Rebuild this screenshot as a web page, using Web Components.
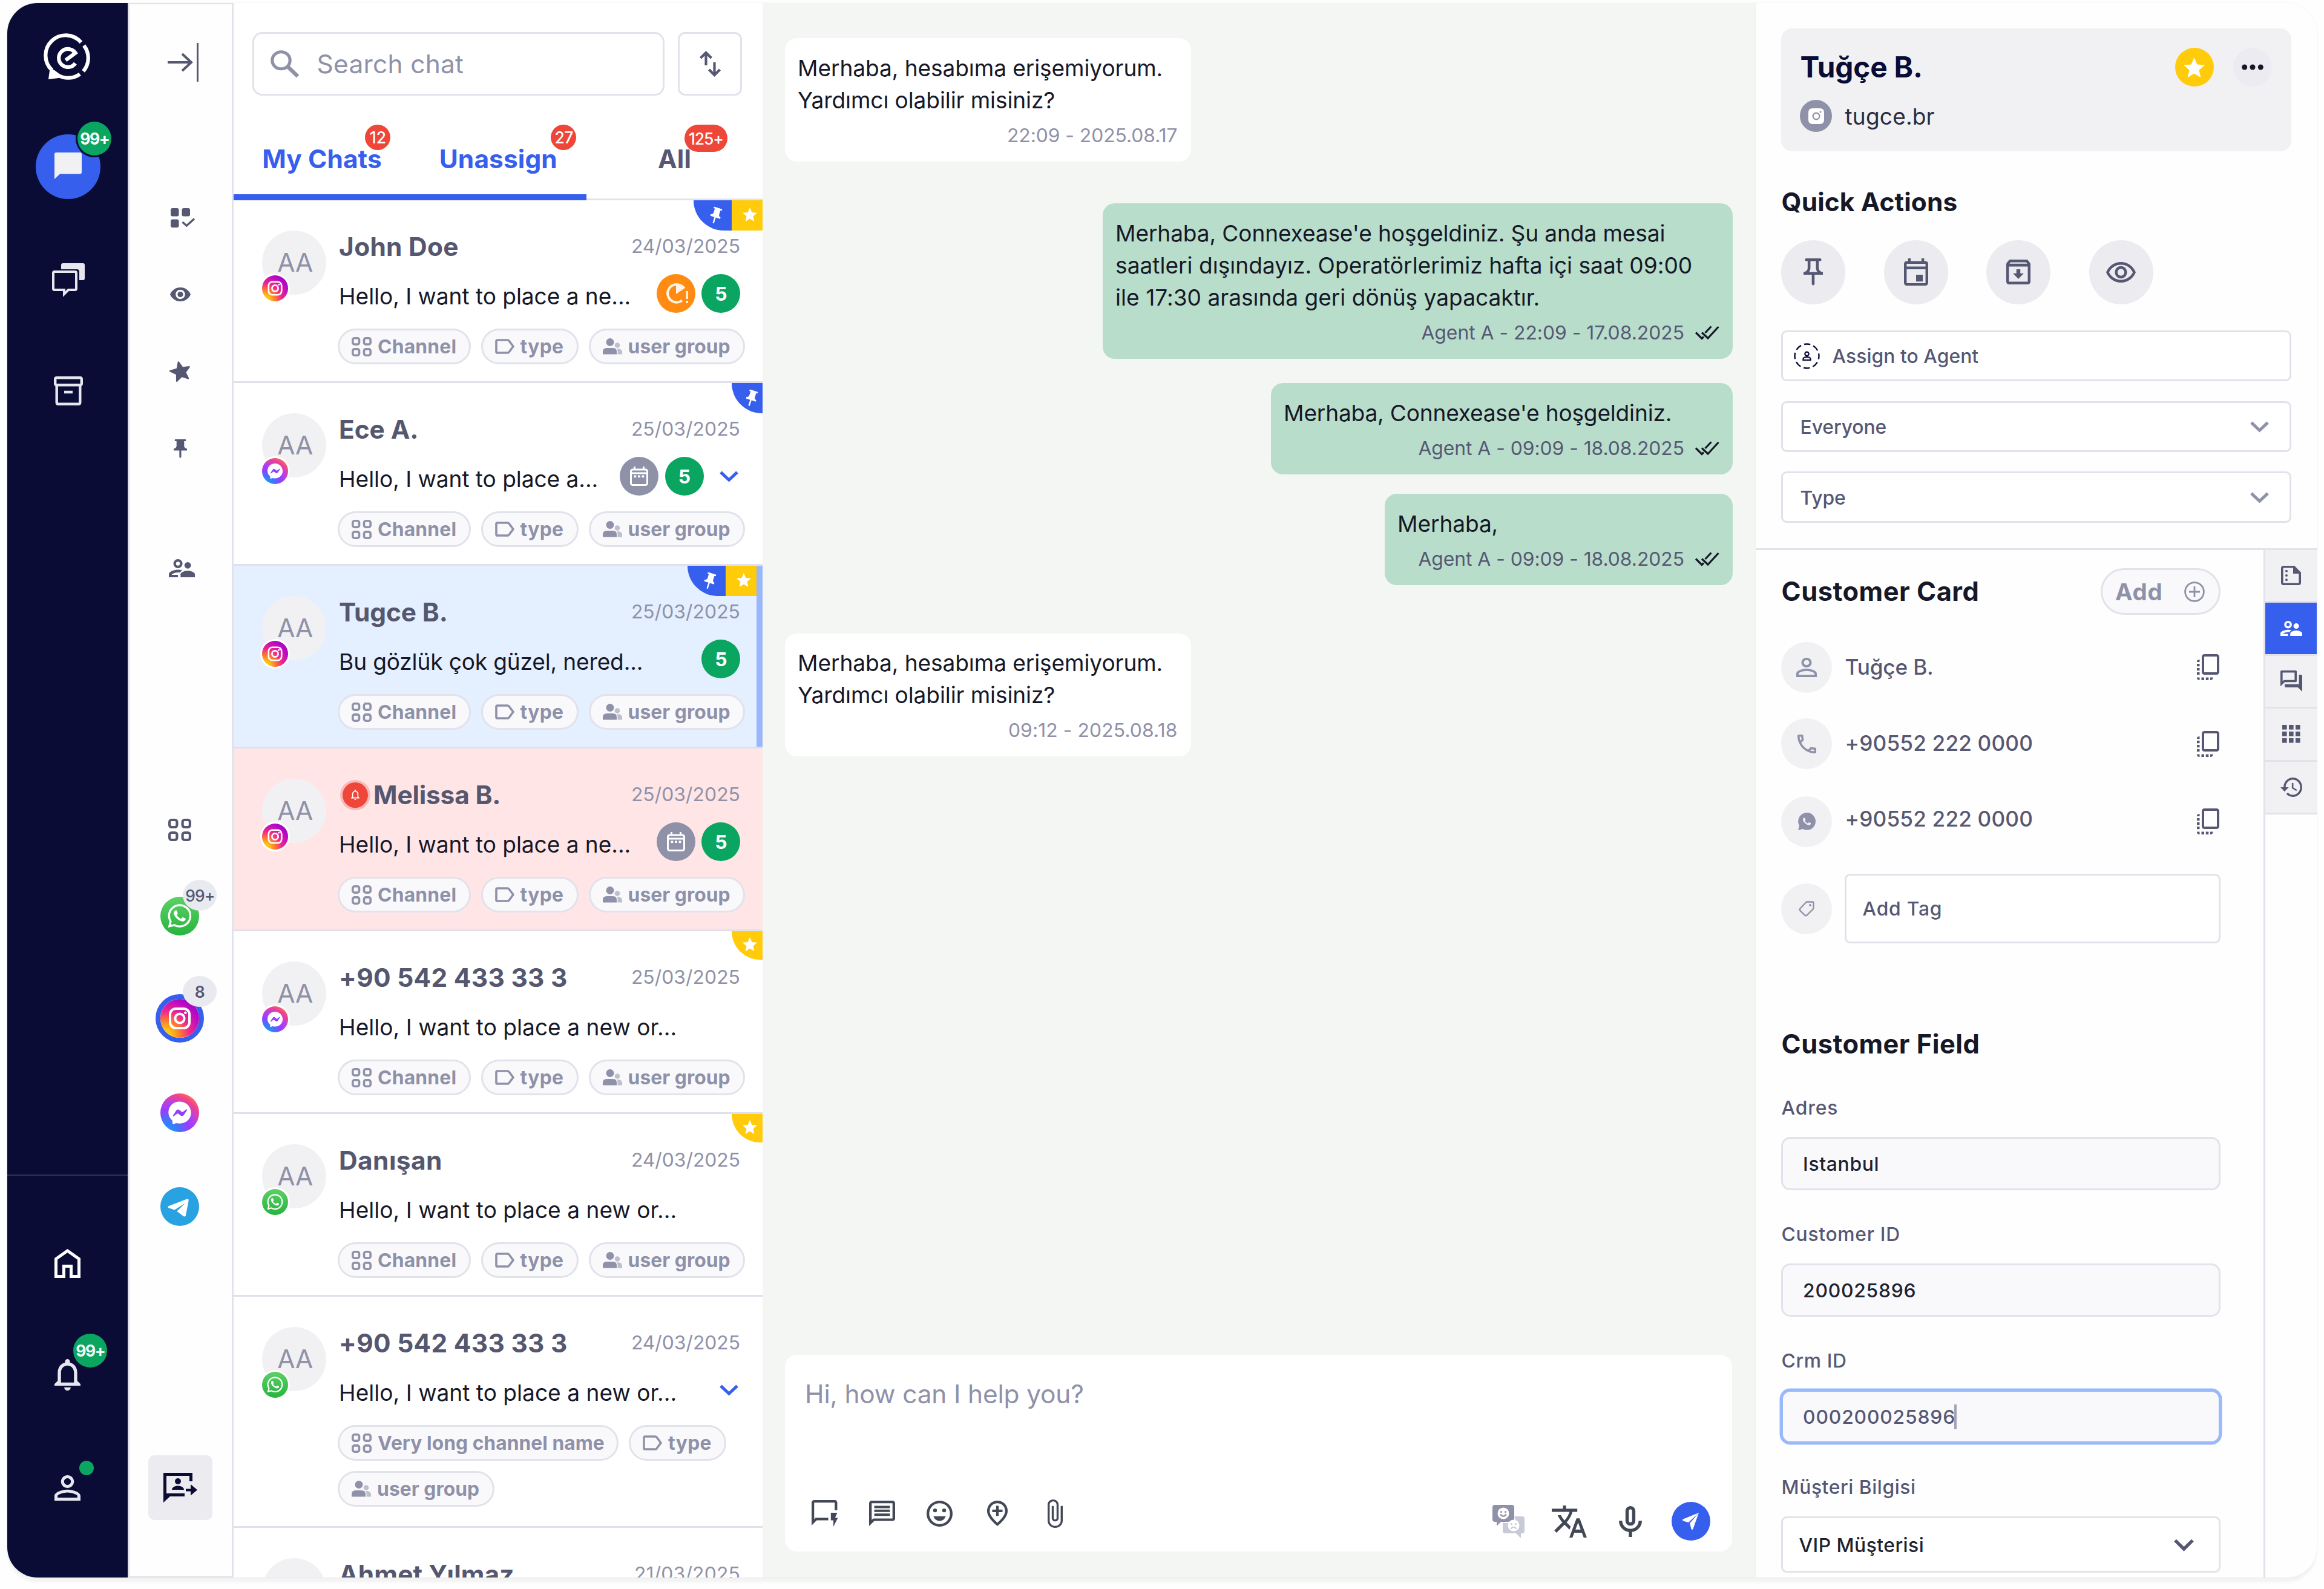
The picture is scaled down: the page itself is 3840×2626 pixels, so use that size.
<!DOCTYPE html>
<html lang="tr">
<head>
<meta charset="utf-8">
<title>Connexease Inbox</title>
<style>
html,body{margin:0;padding:0;background:#fefefe}
body{width:3840px;height:2626px;overflow:hidden;font-family:Inter,"Noto Sans",sans-serif;color:#161827}
</style>
</head>
<body>
<app-shell>
  <main-nav></main-nav>
  <channel-rail></channel-rail>
  <chat-list>
    <chat-card name="John Doe" nw="194" date="24/03/2025" dw="177.5" msg="Hello, I want to place a ne..." mw="479" channel="instagram" flags="pin star" extras="snooze count"></chat-card>
    <chat-card name="Ece A." nw="127.5" date="25/03/2025" dw="177.5" msg="Hello, I want to place a..." mw="425" channel="messenger" flags="pin" extras="calendar count chevron"></chat-card>
    <chat-card name="Tugce B." nw="176" date="25/03/2025" dw="177.5" msg="Bu gözlük çok güzel, nered..." mw="499" channel="instagram" flags="pin star" extras="count" tone="selected"></chat-card>
    <chat-card name="Melissa B." nw="206.5" date="25/03/2025" dw="177.5" msg="Hello, I want to place a ne..." mw="479" channel="instagram" flags="" extras="calendar count" tone="alert"></chat-card>
    <chat-card name="+90 542 433 33 3" nw="374" date="25/03/2025" dw="177.5" msg="Hello, I want to place a new or..." mw="555" channel="messenger" flags="star" extras=""></chat-card>
    <chat-card name="Danışan" nw="167" date="24/03/2025" dw="177.5" msg="Hello, I want to place a new or..." mw="555" channel="whatsapp" flags="star" extras=""></chat-card>
    <chat-card name="+90 542 433 33 3" nw="374" date="24/03/2025" dw="177.5" msg="Hello, I want to place a new or..." mw="555" channel="whatsapp" flags="" extras="chevron" long></chat-card>
    <chat-card name="Ahmet Yılmaz" nw="286" date="21/03/2025" dw="172.5" msg="" mw="" channel="whatsapp" flags="" extras=""></chat-card>
  </chat-list>
  <chat-thread></chat-thread>
  <customer-panel></customer-panel>
</app-shell>
<script>
const ICONS = {
  logo:['0 0 73 73','<g fill="none" stroke="currentColor" stroke-width="6.2"><path d="M58 11A33.3 33.3 0 1 0 10 57 M20 65.4A33.3 33.3 0 0 0 56 63.4"/><path d="M62.6 16.2A33.3 33.3 0 0 1 61.6 58.8"/><path d="M32.5 40.5 48.6 28.6A15 15 0 1 0 48.4 45.6"/></g><path fill="currentColor" d="M6.5 54 4 72 25 69.5 22 63 14 57z"/>'],
  bubble:['0 0 45 44','<path fill="currentColor" d="M3 0h39q3 0 3 3v29.500q0 3-3 3H9L0 44V3q0-3 3-3z"/>'],
  chats:['0 0 54 54','<path fill="currentColor" d="M15 10V3q0-3 3-3h33q3 0 3 3v22q0 3-3 3h-6V14q0-4-4-4z"/><path fill="none" stroke="currentColor" stroke-width="4" d="M4 14h34q2 0 2 2v26q0 2-2 2H27l-7 7v-7H4q-2 0-2-2V16q0-2 2-2z"/>'],
  archive:['0 0 48 48','<g fill="none" stroke="currentColor" stroke-width="4.400"><rect x="2.200" y="2.200" width="43.600" height="12" rx="2"/><path d="M4.700 14v29q0 2.800 2.800 2.800h33q2.800 0 2.800-2.800V14M17 26h14"/></g>'],
  home:['0 0 43 48','<path fill="none" stroke="currentColor" stroke-width="5" d="M2.500 45.500V16.500L21.500 3 40.500 16.500V45.500H27.500V28.500H15.500V45.500Z"/>'],
  bell:['4 2.500 16 19.500','<path fill="currentColor" d="M12 22c1.1 0 2-.9 2-2h-4c0 1.1.9 2 2 2zm6-6v-5c0-3.070-1.630-5.640-4.500-6.320V4c0-.83-.67-1.500-1.500-1.500s-1.500.67-1.500 1.500v.68C7.640 5.360 6 7.920 6 11v5l-2 2v1h16v-1l-2-2zm-2 1H8v-6c0-2.480 1.510-4.500 4-4.500s4 2.020 4 4.500v6z"/>'],
  user:['4 4 16 16','<path fill="currentColor" d="M12 5.900c1.160 0 2.100.94 2.100 2.100s-.94 2.100-2.100 2.100S9.900 9.160 9.900 8s.94-2.100 2.100-2.100m0 9c2.970 0 6.100 1.460 6.100 2.100v1.100H5.900V17c0-.64 3.130-2.100 6.100-2.100M12 4C9.790 4 8 5.790 8 8s1.790 4 4 4 4-1.790 4-4-1.790-4-4-4zm0 9c-2.670 0-8 1.340-8 4v3h16v-3c0-2.660-5.330-4-8-4z"/>'],
  collapse:['0 0 51 64','<g fill="none" stroke="currentColor"><path stroke-width="4" d="M0 32h39M24 18l15 14-15 14"/><path stroke-width="3" d="M49.500 0v64"/></g>'],
  gridcheck:['0 0 40 32','<g fill="currentColor"><rect width="13.500" height="13.500" rx="3"/><rect x="18.500" width="13.500" height="13.500" rx="3"/><rect y="18.500" width="13.500" height="13.500" rx="3"/></g><path fill="none" stroke="currentColor" stroke-width="3.400" d="M19.500 23l6.800 6L39 17.500"/>'],
  eyefill:['1 4.500 22 15','<path fill="currentColor" d="M12 4.500C7 4.500 2.730 7.610 1 12c1.730 4.390 6 7.500 11 7.500s9.270-3.110 11-7.500c-1.730-4.390-6-7.500-11-7.500zM12 17c-2.760 0-5-2.240-5-5s2.240-5 5-5 5 2.240 5 5-2.240 5-5 5zm0-8c-1.660 0-3 1.340-3 3s1.340 3 3 3 3-1.340 3-3-1.340-3-3-3z"/>'],
  star:['2 2 20 19','<path fill="currentColor" d="M12 17.270L18.180 21l-1.640-7.030L22 9.240l-7.190-.61L12 2 9.190 8.630 2 9.240l5.460 4.730L5.820 21z"/>'],
  starside:['2 2 20 20','<path transform="rotate(-85 12 12)" fill="currentColor" stroke="currentColor" stroke-width="1.400" stroke-linejoin="round" d="M12 16.900L17.500 20.200l-1.460-6.250L21 9.700l-6.500-.55L12 2.600 9.500 9.150 3 9.700l4.960 4.250L6.500 20.200z"/>'],
  pin:['5 2 14 20','<path fill="currentColor" d="M16 9V4h1c.55 0 1-.45 1-1s-.45-1-1-1H7c-.55 0-1 .45-1 1s.45 1 1 1h1v5c0 1.660-1.340 3-3 3v2h5.970v7l1 1 1-1v-7H19v-2c-1.660 0-3-1.340-3-3z"/>'],
  pinline:['5 2 14 20','<path fill="currentColor" fill-rule="evenodd" d="M14 4v5c0 1.120.37 2.160 1 3H9c.65-.86 1-1.900 1-3V4h4m3-2H7c-.55 0-1 .45-1 1s.45 1 1 1h1v5c0 1.660-1.340 3-3 3v2h5.970v7l1 1 1-1v-7H19v-2c-1.660 0-3-1.340-3-3V4h1c.55 0 1-.45 1-1s-.45-1-1-1z"/>'],
  people:['2 5 20 14','<g fill="currentColor"><circle cx="16.500" cy="9.800" r="2.500"/><path d="M16.500 14c-1.830 0-5.500.92-5.500 2.750V19h11v-2.250c0-1.830-3.670-2.750-5.500-2.750z"/><path fill-rule="evenodd" d="M9 5a3.500 3.500 0 1 0 0 7 3.500 3.500 0 0 0 0-7zm0 2a1.500 1.500 0 1 1 0 3 1.500 1.500 0 0 1 0-3z"/><path d="M9 13.200c-2.330 0-7 1.170-7 3.500V19h7v-1.900H4.200c.4-.8 2.600-1.700 4.800-1.800l1.500.05c.4-.7 1-1.300 1.900-1.750C11.300 13.400 9.900 13.200 9 13.200z"/></g>'],
  grid:['0 0 38 38','<g fill="none" stroke="currentColor" stroke-width="4.200"><rect x="2.100" y="2.100" width="12.300" height="12.300" rx="3.500"/><rect x="23.600" y="2.100" width="12.300" height="12.300" rx="3.500"/><rect x="2.100" y="23.600" width="12.300" height="12.300" rx="3.500"/><rect x="23.600" y="23.600" width="12.300" height="12.300" rx="3.500"/></g>'],
  transfer:['0 0 56 49','<path fill="none" stroke="currentColor" stroke-width="5" d="M45.500 14V2.500H2.500V42.500L8 36.500H35"/><g fill="currentColor"><path d="M0 30v19l12-11z"/><circle cx="24" cy="14" r="5"/><path d="M14 28c0-4 5-6.500 10-6.500S34 24 34 28z"/><path d="M37 26.500h8V19l11 9.300-11 9.200V30.500h-8z"/></g>'],
  search:['0 0 48 48','<g fill="none" stroke="currentColor"><circle cx="17.500" cy="17.500" r="14.700" stroke-width="5.200"/><path stroke-width="6.500" d="M28.500 28.500 45 45"/></g>'],
  sort:['0 0 35 43','<g fill="none" stroke="currentColor" stroke-width="4.200"><path d="M10.500 24V3M1.500 12l9-9 9 9M24.500 19v21M15.500 31l9 9 9-9"/></g>'],
  tag:['0 0 32 26','<path fill="none" stroke="currentColor" stroke-width="3.600" stroke-linejoin="round" d="M4 2h16.500q1.500 0 2.400 1.200L30 13l-7.100 9.800Q22 24 20.500 24H4q-2 0-2-2V4q0-2 2-2z"/>'],
  group:['0 0 32 27','<g fill="currentColor"><circle cx="12" cy="6.500" r="6.500"/><path d="M0 26.500V22q0-6 7-6h9q7 0 7 6v4.500z"/><g opacity=".55"><circle cx="24" cy="11.500" r="4.300"/><path d="M24.500 26.500V21q0-2.500-1.500-4 9-.5 9 6v3.500z"/></g></g>'],
  chevron:['0 0 32 19','<path fill="none" stroke="currentColor" stroke-width="5.200" d="M2 2.500 16 16 30 2.500"/>'],
  snooze:['0 0 38 36','<path fill="none" stroke="#fff3e6" stroke-width="4" d="M17 3A14.800 14.800 0 1 0 27 29.500"/><path fill="#fff3e6" d="M17 19V1q10 0 15.500 7.500zM33.500 14h3.500v13h-3.500zM33.500 30h3.500v4h-3.500z"/>'],
  calendar:['0 0 30 32','<g fill="none" stroke="currentColor" stroke-width="3"><rect x="1.500" y="5" width="27" height="25.500" rx="3"/><path d="M2 11h26M7.500 0v6M22.500 0v6"/></g><g fill="currentColor"><rect x="6.500" y="14.500" width="3.800" height="3.600"/><rect x="13" y="14.500" width="3.800" height="3.600"/><rect x="19.500" y="14.500" width="3.800" height="3.600"/></g>'],
  checks:['0 0 40 24','<g fill="none" stroke="currentColor" stroke-width="3.200"><path d="M1 12.500 11 22.500 14 19.500M11 12.500l10 9.500L38.500 3M26.500 2.500 16.500 13"/></g>'],
  quick:['2 2 20.500 21','<path fill="currentColor" d="M22 4c0-1.100-.9-2-2-2H4c-1.100 0-1.990.9-1.990 2L2 22l4-4h9v-2H5.170L4 17.170V4h16v6h2V4zM22.500 16h-2.200l1.700-4h-5v6h2v5z"/>'],
  lines:['2 2 20 20','<path fill="currentColor" fill-rule="evenodd" d="M4 4h16v12H5.170L4 17.170V4m0-2c-1.100 0-1.990.9-1.990 2L2 22l4-4h14c1.100 0 2-.9 2-2V4c0-1.100-.9-2-2-2H4zM6 12.100h12v1.900H6zM6 9.050h12v1.900H6zM6 6h12v1.900H6z"/>'],
  smile:['2 2 20 20','<path fill="currentColor" fill-rule="evenodd" d="M12 2a10 10 0 1 0 0 20 10 10 0 0 0 0-20zm0 2a8 8 0 1 1 0 16 8 8 0 0 1 0-16z"/><g fill="currentColor"><circle cx="15.500" cy="9.500" r="1.500"/><circle cx="8.500" cy="9.500" r="1.500"/><path d="M7.300 14h9.400c-.7 2.200-2.500 3.600-4.700 3.600S8 16.200 7.300 14z"/></g>'],
  place:['4 2 16 20','<path fill="none" stroke="currentColor" stroke-width="2" d="M12 20.700c-4.700-4.100-7-7.600-7-10.500C5 5.900 8.200 3 12 3s7 2.900 7 7.200c0 2.900-2.300 6.400-7 10.500z"/><path fill="currentColor" d="M13 6h-2v3H8v2h3v3h2v-3h3V9h-3z"/>'],
  clip:['7 1 11 22','<path fill="currentColor" d="M16.500 6v11.500c0 2.210-1.790 4-4 4s-4-1.790-4-4V5c0-1.380 1.120-2.500 2.500-2.500s2.500 1.120 2.500 2.500v10.500c0 .55-.45 1-1 1s-1-.45-1-1V6H10v9.500c0 1.380 1.120 2.500 2.500 2.500s2.500-1.120 2.500-2.500V5c0-2.210-1.790-4-4-4S7 2.790 7 5v12.500c0 3.040 2.460 5.500 5.500 5.500s5.500-2.460 5.500-5.500V6h-1.500z"/>'],
  mood:['0 0 53 55','<g><path fill="#8f91a8" d="M4 0h28q4 0 4 4v20q0 4-4 4H14l-7 7v-7H4q-4 0-4-4V4q0-4 4-4z"/><circle cx="18" cy="14" r="9.500" fill="#fff"/><g fill="#8f91a8"><circle cx="14.500" cy="11.500" r="1.600"/><circle cx="21.500" cy="11.500" r="1.600"/></g><path d="M13 15.500q5 6.500 10 0" fill="none" stroke="#8f91a8" stroke-width="2.200"/><path fill="#c9cad7" d="M36 19h13q4 0 4 4v20q0 4-4 4h-2v8l-8-8H21q-4 0-4-4V29l4 1h11q5-1 6-6z"/><circle cx="35" cy="34" r="9.500" fill="#fff"/><g fill="#c9cad7"><circle cx="31.500" cy="31.500" r="1.600"/><circle cx="38.500" cy="31.500" r="1.600"/></g><path d="M30.500 39.500q4.500-6 9 0" fill="none" stroke="#c9cad7" stroke-width="2.200"/></g>'],
  translate:['1 2 22 20','<path fill="currentColor" d="M12.870 15.070l-2.540-2.510.03-.03c1.740-1.940 2.980-4.170 3.710-6.530H17V4h-7V2H8v2H1v1.990h11.170C11.500 7.920 10.440 9.750 9 11.350 8.070 10.320 7.300 9.190 6.690 8h-2c.73 1.630 1.730 3.170 2.980 4.560l-5.090 5.020L4 19l5-5 3.110 3.110.76-2.040zM18.500 10h-2L12 22h2l1.120-3h4.750L21 22h2l-4.500-12zm-2.620 7l1.620-4.330L19.120 17h-3.240z"/>'],
  mic:['5 2 14 19','<path fill="currentColor" fill-rule="evenodd" d="M12 14c1.660 0 3-1.340 3-3V5c0-1.660-1.340-3-3-3S9 3.340 9 5v6c0 1.660 1.340 3 3 3zm-1-9c0-.55.45-1 1-1s1 .45 1 1v6c0 .55-.45 1-1 1s-1-.45-1-1V5zm6 6c0 2.760-2.240 5-5 5s-5-2.240-5-5H5c0 3.530 2.610 6.430 6 6.920V21h2v-3.080c3.390-.49 6-3.390 6-6.920h-2z"/>'],
  send:['0 0 27 28','<path fill="currentColor" d="M27 0 1 10.500q-2 1.200 0 3L10 16z"/><path fill="currentColor" d="M27 0 12 17.500l2.500 9q1.300 3 3 0z"/>'],
  event:['3 1 18 20','<path fill="currentColor" fill-rule="evenodd" d="M17 13h-5v5h5zM19 3h-1V1h-2v2H8V1H6v2H5c-1.110 0-2 .9-2 2v14c0 1.100.89 2 2 2h14c1.100 0 2-.9 2-2V5c0-1.100-.9-2-2-2zm0 16.200H5V9h14v10.200zm0-12.200H5V5h14v2z"/>'],
  store:['3 3 18 18','<path fill="currentColor" fill-rule="evenodd" d="M20.540 5.230l-1.390-1.680C18.880 3.210 18.470 3 18 3H6c-.47 0-.88.21-1.160.55L3.460 5.230C3.170 5.570 3 6.020 3 6.500V19c0 1.100.9 2 2 2h14c1.100 0 2-.9 2-2V6.500c0-.48-.17-.93-.46-1.270zM6.240 5h11.520l.83 1H5.420l.82-1zM5 19V8h14v11H5zm8.450-9h-2.900v3H8l4 4 4-4h-2.550z"/>'],
  eye:['1 4 22 15','<path fill="currentColor" fill-rule="evenodd" d="M12 6c3.790 0 7.170 2.130 8.820 5.500C19.170 14.870 15.790 17 12 17s-7.170-2.130-8.820-5.500C4.830 8.130 8.210 6 12 6m0-2C7 4 2.730 7.110 1 11.500 2.730 15.890 7 19 12 19s9.270-3.110 11-7.500C21.270 7.110 17 4 12 4zm0 5c1.380 0 2.500 1.120 2.500 2.500S13.380 14 12 14s-2.500-1.120-2.500-2.500S10.620 9 12 9m0-2c-2.480 0-4.500 2.020-4.500 4.500S9.520 16 12 16s4.500-2.020 4.500-4.500S14.480 7 12 7z"/>'],
  dots:['0 0 36 10','<g fill="#161827"><circle cx="4.700" cy="5" r="4.500"/><circle cx="18" cy="5" r="4.500"/><circle cx="31.300" cy="5" r="4.500"/></g>'],
  igfill:['0 0 26 26','<path fill="#fff" fill-rule="evenodd" d="M7 0h12q7 0 7 7v12q0 7-7 7H7q-7 0-7-7V7q0-7 7-7zm6 6.500a6.500 6.500 0 1 0 0 13 6.500 6.500 0 0 0 0-13zm0 2.200a4.300 4.300 0 1 1 0 8.600 4.300 4.300 0 0 1 0-8.600zM20 4.500a1.500 1.500 0 1 0 0 3 1.500 1.500 0 0 0 0-3z"/>'],
  agent:['0 0 43 43','<circle cx="21.500" cy="21.500" r="20" fill="none" stroke="currentColor" stroke-width="2.400" stroke-dasharray="10.500 5.208" stroke-dashoffset="5.200"/><g fill="none" stroke="currentColor" stroke-width="2.200"><circle cx="21.500" cy="17.800" r="3.200"/><path d="M15.400 28.200v-1.600q0-3.400 6.100-3.400t6.100 3.400v1.600z"/></g>'],
  plus:['0 0 34 34','<g fill="none" stroke="currentColor" stroke-width="2.800"><circle cx="17" cy="17" r="15.400"/><path d="M17 8v18M8 17h18"/></g>'],
  copy:['0 0 37 43','<rect x="10" y="2" width="25" height="30" rx="2.500" fill="none" stroke="currentColor" stroke-width="4"/><g fill="currentColor"><path d="M0 12q0-3 4.500-3v4H0z"/><rect y="16" width="4.500" height="4.200"/><rect y="23" width="4.500" height="4.200"/><rect y="30" width="4.500" height="4.200"/><path d="M0 38.500h4.500V43Q0 43 0 38.500z"/><rect x="7.500" y="38.500" width="4.500" height="4.500"/><rect x="14.800" y="38.500" width="4.500" height="4.500"/><path d="M22 38.500h4.500Q26.500 43 22 43z"/></g>'],
  phone:['3 3 18 18','<path fill="currentColor" fill-rule="evenodd" d="M6.540 5c.06.89.21 1.760.45 2.590l-1.200 1.200c-.41-1.200-.67-2.470-.76-3.790h1.510m9.860 12.020c.85.24 1.720.39 2.600.45v1.490c-1.320-.09-2.590-.35-3.800-.75l1.200-1.190M7.500 3H4c-.55 0-1 .45-1 1 0 9.390 7.610 17 17 17 .55 0 1-.45 1-1v-3.490c0-.55-.45-1-1-1-1.240 0-2.450-.2-3.570-.57-.1-.04-.21-.05-.31-.05-.26 0-.51.1-.71.29l-2.200 2.200c-2.830-1.450-5.150-3.760-6.590-6.590l2.200-2.200c.28-.28.36-.67.25-1.020C8.700 6.450 8.500 5.250 8.500 4c0-.55-.45-1-1-1z"/>'],
  price:['0 0 26 26','<path fill="none" stroke="currentColor" stroke-width="2.400" stroke-linejoin="round" d="M14 1.500h9q1.500 0 1.500 1.500v8.500q0 1.300-1 2.200L13.500 23.500q-1.800 1.500-3.400 0l-7.700-7.600q-1.500-1.700 0-3.400L11.800 2.500q.9-1 2.200-1z"/><circle cx="19" cy="6.800" r="1.900" fill="currentColor"/>'],
  doc:['0 0 33 33','<path fill="none" stroke="currentColor" stroke-width="3.600" d="M21.500 1.800H4q-2.200 0-2.200 2.200v25q0 2.200 2.200 2.200h25q2.200 0 2.200-2.200V12z"/><g fill="currentColor"><path d="M20 0v13.500h12z"/><circle cx="9" cy="9" r="2"/><circle cx="9" cy="16.500" r="2"/><circle cx="9" cy="24" r="2"/></g>'],
  forum:['2 2 20 20','<path fill="currentColor" fill-rule="evenodd" d="M15 4v7H5.170L4 12.170V4h11m1-2H3c-.55 0-1 .45-1 1v14l4-4h10c.55 0 1-.45 1-1V3c0-.55-.45-1-1-1zm5 4h-2v9H6v2c0 .55.45 1 1 1h11l4 4V7c0-.55-.45-1-1-1z"/>'],
  apps:['0 0 30 30','<g fill="currentColor">'+[0,11,22].map(y=>[0,11,22].map(x=>`<rect x="${x}" y="${y}" width="7.600" height="7.600"/>`).join('')).join('')+'</g>'],
  history:['1 3 21 18','<path fill="currentColor" d="M13 3c-4.970 0-9 4.030-9 9H1l3.890 3.890.07.14L9 12H6c0-3.870 3.130-7 7-7s7 3.130 7 7-3.130 7-7 7c-1.930 0-3.680-.79-4.940-2.060l-1.420 1.420C8.270 19.990 10.510 21 13 21c4.970 0 9-4.030 9-9s-4.030-9-9-9zm-1 5v5l4.280 2.540.72-1.210-3.500-2.080V8H12z"/>']
};
const WA_PHONE='M17.472 14.382c-.297-.149-1.758-.867-2.03-.967-.273-.099-.471-.148-.67.15-.197.297-.767.966-.94 1.164-.173.199-.347.223-.644.075-.297-.15-1.255-.463-2.39-1.475-.883-.788-1.48-1.761-1.653-2.059-.173-.297-.018-.458.13-.606.134-.133.298-.347.446-.52.149-.174.198-.298.298-.497.099-.198.05-.371-.025-.52-.075-.149-.669-1.612-.916-2.207-.242-.579-.487-.5-.669-.51-.173-.008-.371-.01-.57-.01-.198 0-.52.074-.792.372-.272.297-1.04 1.016-1.04 2.479 0 1.462 1.065 2.875 1.213 3.074.149.198 2.096 3.2 5.077 4.487.709.306 1.262.489 1.694.625.712.227 1.36.195 1.871.118.571-.085 1.758-.719 2.006-1.413.248-.694.248-1.289.173-1.413-.074-.124-.272-.198-.57-.347';
const WA_OUTER='M20.464 3.488A11.815 11.815 0 0012.05 0C5.495 0 .16 5.335.157 11.892c0 2.096.547 4.142 1.588 5.945L.057 24l6.305-1.654a11.882 11.882 0 005.683 1.448h.005c6.554 0 11.89-5.335 11.893-11.893a11.821 11.821 0 00-3.48-8.413z';
const WA_INNER='M12.051 21.785h-.004a9.87 9.87 0 01-5.031-1.378l-.361-.214-3.741.982.998-3.648-.235-.374a9.86 9.86 0 01-1.51-5.26c.001-5.45 4.436-9.884 9.888-9.884 2.64 0 5.122 1.03 6.988 2.898a9.825 9.825 0 012.893 6.994c-.003 5.45-4.437 9.884-9.885 9.884z';
ICONS.whatsapp=['0 0 64 64',`<defs><linearGradient id="g" x1="0" y1="0" x2="0" y2="1"><stop offset="0" stop-color="#5bd066"/><stop offset="1" stop-color="#27b43e"/></linearGradient></defs><circle cx="32" cy="32" r="32" fill="url(#g)"/><g transform="translate(12.400 12.200) scale(1.620)" fill="#fff"><path fill-rule="evenodd" d="${WA_OUTER}${WA_INNER}"/><path d="${WA_PHONE}"/></g>`];
ICONS.wafill=['0 0 24 24',`<path fill="currentColor" d="${WA_OUTER}"/><path fill="#f1f1f4" transform="translate(1.200 1.200) scale(.9)" d="${WA_PHONE}"/>`];
ICONS.instagram=['0 0 64 64','<defs><radialGradient id="g" cx=".12" cy=".95" r="1.150"><stop offset="0" stop-color="#ffd500"/><stop offset=".15" stop-color="#ffc210"/><stop offset=".38" stop-color="#ff6a3c"/><stop offset=".55" stop-color="#f0288c"/><stop offset=".82" stop-color="#b80ac4"/><stop offset="1" stop-color="#a000c8"/></radialGradient></defs><circle cx="32" cy="32" r="32" fill="url(#g)"/><g fill="none" stroke="#fff" stroke-width="4"><rect x="16" y="16" width="32" height="32" rx="9.500"/><circle cx="32" cy="32" r="7.600"/></g><circle cx="41.300" cy="22.700" r="2.200" fill="#fff"/>'];
ICONS.messenger=['0 0 64 64','<defs><radialGradient id="g" cx=".18" cy="1" r="1.100"><stop offset="0" stop-color="#0aa0ff"/><stop offset=".32" stop-color="#4f6bfa"/><stop offset=".52" stop-color="#9a3cff"/><stop offset=".68" stop-color="#b340ea"/><stop offset=".88" stop-color="#f0428c"/><stop offset="1" stop-color="#ff6a60"/></radialGradient></defs><circle cx="32" cy="32" r="32" fill="url(#g)"/><path fill="#fff" d="M32 13.500c-10.800 0-18.700 7.700-18.700 17.700 0 5.300 2.200 9.800 5.800 13 .5.500.8 1.200.8 1.800l.1 3.300c0 1.200 1.200 1.800 2.200 1.400l3.700-1.700c2 .5 4 .8 6.100.8 10.800 0 18.700-7.700 18.700-17.700S42.800 13.500 32 13.500z"/><path fill="#9440ff" d="M20.800 36.600l5.500-8.500q2-2.600 5-.8l4.200 3.200q.9.500 1.700 0l5.700-4.200c.8-.5 1.700.3 1.300 1.100l-5.500 8.400q-2 2.700-5 .9l-4.300-3.200q-.8-.6-1.700 0l-5.700 4.300c-.8.500-1.700-.4-1.200-1.200z"/>'];
ICONS.telegram=['0 0 64 64','<circle cx="32" cy="32" r="32" fill="#29a2e2"/><path fill="#fff" d="M13.500 31.300 43.800 19.600q3.200-1 2.900 2.300L42 46.500q-1 3.200-3.800 1.400l-11-8.200 14.200-13.500-18 11.200-9.600-3.200q-2.300-1.400-.3-2.900z"/>'];

class Base extends HTMLElement {
  render(css, html){ if(!this.shadowRoot) this.attachShadow({mode:'open'}); this.shadowRoot.innerHTML = `<style>${css}</style>${html}`; }
}
/* Single text run; "w" is its drawn width, reached by tracking. */
customElements.define('ui-text', class extends Base {
  connectedCallback(){
    const s=+this.getAttribute('s')||37.1, wt=this.getAttribute('b')||400, c=this.getAttribute('c')||'inherit';
    this.render(`:host{display:block;flex:none;width:max-content;height:${s}px;white-space:nowrap;font-size:${s}px;line-height:${s}px;font-weight:${wt};color:${c}}div{padding:.700px 0 0 .600px}`,'<div><slot></slot></div>');
    const w=+this.getAttribute('w'), n=this.textContent.length;
    if(w && n>1) queueMicrotask(()=>{ const nat=this.getBoundingClientRect().width; this.style.letterSpacing=((w+s*.1-nat)/n).toFixed(3)+'px'; });
  }
});
const T=(t,s,b,c,w,extra='')=>`<ui-text s="${s}" b="${b}" c="${c}" w="${w||''}" ${extra}>${t}</ui-text>`;
customElements.define('ui-icon', class extends Base {
  connectedCallback(){
    const [vb,body]=ICONS[this.getAttribute('name')], w=this.getAttribute('w'), h=this.getAttribute('h')||w;
    this.render(`:host{display:block;flex:none;width:${w}px;height:${h}px}svg{display:block;width:100%;height:100%;overflow:visible}`,`<svg viewBox="${vb}" preserveAspectRatio="none">${body}</svg>`);
  }
});
const I=(n,w,h,extra='')=>`<ui-icon name="${n}" w="${w}" h="${h||w}" ${extra}></ui-icon>`;
customElements.define('app-shell', class extends Base {
  connectedCallback(){ this.render(`:host{display:block;width:3816px;height:2602px;margin:5px 12px 0;border-radius:50px;box-shadow:0 8px 4px rgba(0,0,0,.045),0 0 3px rgba(0,0,0,.08)}.in{display:flex;height:100%;border-radius:50px;overflow:hidden;background:#fefefe}`,'<div class="in"><slot></slot></div>'); }
});
customElements.define('main-nav', class extends Base {
  connectedCallback(){ this.render(`
:host{display:flex;flex-direction:column;justify-content:space-between;width:199px;height:100%;background:#0a0c36;color:#e6e7ee;flex:none}
.top,.bot{display:flex;flex-direction:column;align-items:center}
.top{padding:54px 0 0 2px}.bot{height:664px;border-top:2px solid #30344f}
.cur{position:relative;display:flex;align-items:center;justify-content:center;width:107px;height:107px;border-radius:50%;background:#375fee;margin:90px 0 106px;color:#f1f1f4}
.n{position:absolute;display:flex;align-items:center;justify-content:center;width:56px;height:56px;border-radius:50%;background:#0aa560}
.cur .n{left:69px;top:-21px;box-shadow:0 0 0 3px #0a0c36}
.r{position:relative}
`,`<div class="top">${I('logo',73,73,'style="color:#fff"')}<div class="cur">${I('bubble',45,44,'style="margin-top:-4px"')}<div class="n">${T('99+',26.5,700,'#fff',46)}</div></div>${I('chats',54)}${I('archive',48,48,'style="margin-top:133px"')}</div>
<div class="bot">${I('home',43,48,'style="margin-top:121px;color:#fff"')}<div class="r" style="margin-top:134px">${I('bell',43,52)}<div class="n" style="left:31px;top:-42px">${T('99+',26.5,700,'#f1f8f4',46)}</div></div><div class="r" style="margin-top:140px">${I('user',43,42)}<div class="n" style="left:41px;top:-24px;width:24px;height:24px"></div></div></div>`); }
});
customElements.define('channel-rail', class extends Base {
  connectedCallback(){ this.render(`
:host{display:flex;flex-direction:column;box-sizing:border-box;align-items:center;width:175px;height:100%;border:2px solid #e1e2ea;border-left-width:3px;border-right-width:3px;padding-right:3px;color:#565873;flex:none;background:#fefefe}
.r{position:relative;left:0}.b{position:absolute;display:flex;align-items:center;justify-content:center;width:56px;height:51px;border-radius:50%;background:#e9eaef}
.ring{border:8px solid #375fee;border-radius:50%}
.btn{display:flex;align-items:center;justify-content:center;width:106px;height:107px;border-radius:10px;background:#ebebf0;color:#0a0c36;margin:379px 0 0 2px}
`,`${I('collapse',51,64,'style="margin:64px 0 0 10px"')}${I('gridcheck',40,32,'style="margin:209px 0 0 9px"')}${I('eyefill',34,23,'style="margin:99px 0 0 2px"')}${I('starside',35,35,'style="margin-top:99px"')}${I('pin',22,31,'style="margin:94px 0 0 2px"')}${I('people',43,30,'style="margin:167px 0 0 6px"')}${I('grid',38,37,'style="margin-top:399px"')}
<div class="r" style="margin-top:92px">${I('whatsapp',64)}<div class="b" style="left:37px;top:-28px">${T('99+',26.5,500,'#565873',46)}</div></div>
<div class="r ring" style="margin-top:97px">${I('instagram',64)}<div class="b" style="left:37px;top:-38px">${T('8',26.5,600,'#565873','')}</div></div>
<div style="margin-top:84px">${I('messenger',64)}</div><div style="margin-top:91px">${I('telegram',64)}</div>
<div class="btn">${I('transfer',56,49)}</div>`); }
});
customElements.define('ui-chip', class extends Base {
  connectedCallback(){ const k=this.getAttribute('icon'); const [w,h]={grid:[33,32],tag:[32,25],group:[32,27]}[k];
    this.render(`:host{display:flex;flex:none;box-sizing:border-box;align-items:center;height:59px;width:${this.getAttribute('width')}px;padding-left:20px;gap:9.500px;border:3px solid #e1e2ea;border-radius:30px;background:#f9f9fc;color:#8f91a8}`,
    `${I(k,w,h)}${T(this.getAttribute('label'),31.8,700,'#8f91a8',this.getAttribute('tw'))}`); }
});
customElements.define('chat-list', class extends Base {
  connectedCallback(){ this.render(`
:host{display:block;width:874px;height:100%;overflow:hidden;background:#fff;flex:none}
.s{display:flex;gap:22px;padding:48px 0 0 31px}
.f{box-sizing:border-box;display:flex;align-items:center;width:681px;height:105px;border:3px solid #e1e2ea;border-radius:16px;padding-left:27px;gap:28px;color:#8f91a8}
.o{box-sizing:border-box;display:flex;align-items:center;justify-content:center;width:106px;height:105px;border:3px solid #e1e2ea;border-radius:12px;color:#565873}
.t{display:flex;height:173px}
.t>div{position:relative;box-sizing:border-box;flex:1;display:flex;justify-content:center;padding-top:83px;border-bottom:3px solid #e1e2ea}
.t>.on{border-bottom:10px solid #375fee}
.n{position:absolute;top:48px;display:flex;align-items:center;justify-content:center;height:42px;width:42px;border-radius:23px;background:#ee4639}
`,`<div class="s"><div class="f">${I('search',48,46)}${T('Search chat',42.4,400,'#8f91a8',239)}</div><div class="o">${I('sort',35,43)}</div></div>
<div class="t"><div class="on">${T('My Chats',42.4,700,'#375fee',194)}<div class="n" style="left:217px">${T('12',26.5,500,'#fff',25)}</div></div><div class="on">${T('Unassign',42.4,700,'#375fee',191.5)}<div class="n" style="left:233px">${T('27',26.5,500,'#fff',28)}</div></div><div>${T('All',42.4,700,'#565873',51.5)}<div class="n" style="left:162px;width:71px;height:45px">${T('125+',26.5,500,'#fff',55)}</div></div></div><slot></slot>`); }
});
customElements.define('chat-card', class extends Base {
  connectedCallback(){ const a=k=>this.getAttribute(k)||''; const sel=a('tone')==='selected', al=a('tone')==='alert', long=this.hasAttribute('long');
    const flags=a('flags').split(' ').filter(Boolean), ex=a('extras').split(' ').filter(Boolean);
    const E={snooze:`<div class="c" style="background:#ff8b13">${I('snooze',38,36,'style="margin-left:4px"')}</div>`,calendar:`<div class="c" style="background:#8f91a8;color:#fff">${I('calendar',30,32)}</div>`,count:`<div class="c" style="background:#0aa560">${T('5',31.8,700,'#fff','')}</div>`,chevron:I('chevron',31,18,`style="color:#375fee;margin:0 3px 0 16px"`)};
    this.render(`
:host{position:relative;display:flex;box-sizing:border-box;height:${long?382:302}px;border-bottom:3px solid #dfe1ea;background:${sel?'#e4efff':al?'#ffe5e6':'#fff'}}
.bar{position:absolute;right:0;top:0;bottom:0;width:10px;background:#9ab7fa}
.fl{position:absolute;right:${sel?10:0}px;top:0;display:flex;height:${flags[0]==='star'?47:50}px;border-bottom-left-radius:50px;overflow:hidden;color:#fff}
.fl div{display:flex;align-items:center;justify-content:center;width:51px}
.fl .pin{background:#375fee}.fl .star{background:#ffcb0b}.fl .w{width:63px;}
.av{position:relative;display:flex;align-items:center;justify-content:center;width:106px;height:106px;border-radius:50%;background:#f1f1f4;margin:50px 19px 0 47px;flex:none}
.av ui-icon{position:absolute;left:0;bottom:-11px;border-radius:50%;box-shadow:0 0 0 3px #fff}
.bd{flex:1;padding-top:47px}
.r1{display:flex;align-items:center;justify-content:space-between;height:60px;padding:0 37px 0 1.500px}
.nm{display:flex;align-items:center;gap:9px}
.bell{display:flex;align-items:center;justify-content:center;width:42px;height:42px;border-radius:50%;background:#ee4639;box-shadow:0 0 0 4px #f9b9b6;color:#fff;margin-left:6px}
.r2{display:flex;align-items:center;justify-content:space-between;height:64px;margin-top:15px;padding:0 37px 0 1.500px}
.ex{display:flex;align-items:center;gap:10.5px}.c{display:flex;align-items:center;justify-content:center;width:64px;height:64px;border-radius:50%}
.ch{display:flex;flex-wrap:wrap;gap:17px;margin-top:26px;width:690px}
`,`${sel?'<div class="bar"></div>':''}<div class="fl">${flags.map((f,i)=>`<div class="${f}${flags.length>1&&i==0?' w':''}">${f==='pin'?I('pin',17,27,`style="transform:rotate(18deg);margin-left:${flags.length>1?10:14}px"`):I('star',24,23,'style="margin-left:8px;margin-top:-4px"')}</div>`).join('')}</div>
<div class="av">${a('msg')?T('AA',42.400,400,'#8f91a8',55.500,'style="margin-left:3px"')+I(a('channel'),43):''}</div>
<div class="bd"><div class="r1"><div class="nm">${al?`<div class="bell">${I('bell',14,17)}</div>`:''}${T(a('name'),42.4,700,'#55576f',a('nw'))}</div>${T(a('date'),31.8,400,'#8f91a8',a('dw'),'style="margin-bottom:3px"')}</div>
${a('msg')?`<div class="r2">${T(a('msg'),37.1,400,'#161827',a('mw'),'style="margin-top:7px"')}<div class="ex">${ex.map(e=>E[e]).join('')}</div></div>
<div class="ch">${long?'<ui-chip icon="grid" label="Very long channel name" tw="372" width="464"></ui-chip>':'<ui-chip icon="grid" label="Channel" tw="127.5" width="219.500"></ui-chip>'}<ui-chip icon="tag" label="type" tw="69" width="161"></ui-chip><ui-chip icon="group" label="user group" tw="166.5" width="258.500"></ui-chip></div>`:''}</div>`); }
});
customElements.define('chat-bubble', class extends Base {
  connectedCallback(){ const out=this.hasAttribute('out'); const lines=this.getAttribute('lines').split('|').map(l=>l.split('~'));
    this.render(`
:host{display:block;box-sizing:border-box;width:${this.getAttribute('width')}px;align-self:${out?'flex-end':'flex-start'};background:${out?'#b8ddcb':'#fff'};border-radius:20px;padding:22px 22px 22.500px 20.500px}
.l{display:flex;align-items:center;height:53px}.m{display:flex;align-items:center;justify-content:flex-end;height:42px;margin-top:11px;gap:18px;color:#161827}`,
    `${lines.map(([t,w])=>`<div class="l">${T(t,37.1,400,'#161827',w)}</div>`).join('')}<div class="m">${T(this.getAttribute('meta'),31.8,400,out?'#565873':'#8f91a8',this.getAttribute('mw'))}${out?I('checks',40,24):''}</div>`); }
});
customElements.define('chat-thread', class extends Base {
  connectedCallback(){ this.render(`
:host{display:flex;flex-direction:column;box-sizing:border-box;width:1640px;height:100%;padding:58px 37px 43px;background:#f4f6f3;flex:none}
.box{box-sizing:border-box;display:flex;flex-direction:column;justify-content:space-between;width:1565px;height:325px;background:#fff;border-radius:20px;margin-top:auto;padding:43px 36px 18px 32.500px;color:#434856}
.r{display:flex;justify-content:space-between;align-items:center}.a,.b{display:flex;align-items:center}
.a{gap:52px;padding-left:11px;margin-top:-26px}
.send{display:flex;align-items:center;justify-content:center;width:64px;height:64px;border-radius:50%;background:#375fee;color:#fff;margin-left:49px}
`,`<chat-bubble width="670.500" lines="Merhaba, hesabıma erişemiyorum.~600|Yardımcı olabilir misiniz?~422" meta="22:09 - 2025.08.17" mw="279"></chat-bubble>
<chat-bubble out width="1041" style="margin-top:69.500px" lines="Merhaba, Connexease'e hoşgeldiniz. Şu anda mesai~905|saatleri dışındayız. Operatörlerimiz hafta içi saat 09:00~950|ile 17:30 arasında geri dönüş yapacaktır.~698" meta="Agent A - 22:09 - 17.08.2025" mw="432"></chat-bubble>
<chat-bubble out width="763" style="margin-top:40.500px" lines="Merhaba, Connexease'e hoşgeldiniz.~638" meta="Agent A - 09:09 - 18.08.2025" mw="437"></chat-bubble>
<chat-bubble out width="575" style="margin-top:32.500px" lines="Merhaba,~163" meta="Agent A - 09:09 - 18.08.2025" mw="437"></chat-bubble>
<chat-bubble width="670.500" style="margin-top:80px" lines="Merhaba, hesabıma erişemiyorum.~600|Yardımcı olabilir misiniz?~422" meta="09:12 - 2025.08.18" mw="277"></chat-bubble>
<div class="box">${T('Hi, how can I help you?',42.4,400,'#8f91a8',457)}
<div class="r"><div class="a">${I('quick',43.500,44)}${I('lines',43,42)}${I('smile',43,43)}${I('place',34,42,'style="margin:0 4px 0 5px"')}${I('clip',25,47,'style="margin-left:10px"')}</div>
<div class="b">${I('mood',53,55)}${I('translate',58,53,'style="margin-left:45px"')}${I('mic',38,51,'style="margin-left:53px"')}<div class="send">${I('send',27,28,'style="margin-right:2px"')}</div></div></div></div>`); }
});
customElements.define('form-field', class extends Base {
  connectedCallback(){ const f=this.hasAttribute('focused'), s=this.hasAttribute('select'); const a=k=>this.getAttribute(k);
    this.render(`
:host{display:block;margin-bottom:56px}
.i{box-sizing:border-box;display:flex;align-items:center;height:${s?93:88}px;margin-top:33.200px;padding:0 41px 0 ${s?26:32.5}px;border:3px solid #e1e2ea;border-radius:${s?9:15}px;background:${s?'#fff':'#f9f9fc'};color:#565873}
.f{border-color:#9ab9fb;box-shadow:0 0 0 2.500px #9ab9fb}
.c{width:4px;height:41px;background:#a2a4b5;margin-left:-2px}.g{flex:1}`,
    `${T(a('label'),31.8,500,'#565873',a('lw'))}<div class="i${f?' f':''}">${T(a('value'),31.8,500,f?'#565873':'#20222f',a('vw'))}${f?'<div class="c"></div>':''}<div class="g"></div>${s?I('chevron',33,20):''}</div>`); }
});
customElements.define('customer-panel', class extends Base {
  connectedCallback(){
    const qa=(n,w,h)=>`<div class="q">${I(n,w,h)}</div>`;
    const sel=(t,w)=>`<div class="sel">${T(t,31.8,500,'#565873',w)}${I('chevron',31,18,'style="color:#8f91a8"')}</div>`;
    const row=(n,w,h,t,tw,mt,dy)=>`<div class="row" style="margin-top:${mt}px"><div class="k">${I(n,w,h)}</div>${T(t,35.2,500,'#565873',tw,`style="margin-top:${dy}px"`)}<div class="g"></div>${I('copy',37,43,'style="margin-right:2px"')}</div>`;
    const tab=(n,w,h,on)=>`<div class="tab${on?' on':''}">${I(n,w,h)}</div>`;
    this.render(`
:host{display:flex;flex-direction:column;box-sizing:border-box;width:928px;height:100%;background:#fefefe;overflow:hidden;color:#565873;flex:none;border-left:1px solid #f0f0f4}
.up{padding:42px 42.500px 0 42px;height:858.500px;border-bottom:3px solid #e1e2ea;flex:none}
.card{box-sizing:border-box;height:202.500px;border-radius:18px;background:#f1f1f4;padding:32px 32px 0 31px}
.h{display:flex;align-items:center;height:64px}.g{flex:1}
.ci{display:flex;align-items:center;justify-content:center;width:64px;height:64px;border-radius:50%;background:#ebebf1}
.u{display:flex;align-items:center;gap:21px;margin-top:22px}
.u .x{display:flex;align-items:center;justify-content:center;width:53px;height:53px;border-radius:50%;background:#8f91a8}
.qs{display:flex;gap:63.500px;margin-top:42px}.q{display:flex;align-items:center;justify-content:center;width:106px;height:106px;border-radius:50%;background:#ebebf0}
.sel{box-sizing:border-box;display:flex;align-items:center;justify-content:space-between;height:84.500px;border:3px solid #e1e2ea;border-radius:9px;background:#fff;padding:0 34px 0 28px;margin-top:32.300px}
.dn{display:flex;flex:1;min-height:0}
.mn{width:726px;padding:30.500px 71px 0 42px;flex:none;overflow:hidden}
.sd{flex:1;border-left:3px solid #e1e2ea}
.tab{box-sizing:border-box;display:flex;align-items:center;justify-content:center;height:87.500px;border-bottom:3px solid #e1e2ea;background:#f1f1f4}.on{background:#375fee;color:#fff}
.add{box-sizing:border-box;display:flex;align-items:center;justify-content:space-between;width:198.500px;height:77px;border:3px solid #e1e2ea;border-radius:39px;background:#f9f9fc;padding:0 23px 0 21px;color:#8f91a8}
.t{display:flex;align-items:center;justify-content:space-between}
.row{display:flex;align-items:center}.k{display:flex;align-items:center;justify-content:center;width:84px;height:84px;border-radius:50%;background:#f1f1f4;color:#8f91a8;margin-right:21px;flex:none}
.tg{box-sizing:border-box;display:flex;align-items:center;flex:1;height:115px;border:3px solid #e1e2ea;border-radius:9px;padding-left:26px;background:#fff}
`,`<div class="up"><div class="card"><div class="h">${T('Tuğçe B.',47.7,700,'#0a0c36',198)}<div class="g"></div><div class="ci" style="background:#ffcb0b;color:#fff">${I('star',35,33)}</div><div class="ci" style="margin-left:32px">${I('dots',36,10)}</div></div>
<div class="u"><div class="x">${I('igfill',26)}</div>${T('tugce.br',37.1,400,'#2b2d42',145)}</div></div>
${T('Quick Actions',42.4,700,'#161827',287,'style="margin-top:63px"')}
<div class="qs">${qa('pinline',32,45)}${qa('event',40,45)}${qa('store',40,41)}${qa('eye',49,34)}</div>
<div class="sel" style="margin-top:43px;justify-content:flex-start;gap:20px;padding-left:18px;color:#0a0c36">${I('agent',43)}${T('Assign to Agent',31.8,500,'#565873',239)}</div>${sel('Everyone',140)}${sel('Type',72.5)}</div>
<div class="dn"><div class="mn"><div class="t">${T('Customer Card',43.4,700,'#161827',323)}<div class="add">${T('Add',38.5,700,'#8f91a8',75)}${I('plus',34)}</div></div>
${row('user',34,32,'Tuğçe B.',143,44.5,-1)}${row('phone',31,31,'+90552 222 0000',307.5,42.5,-3)}${row('wafill',29,29,'+90552 222 0000',307.5,44.5,-9)}
<div class="row" style="margin-top:44.500px"><div class="k">${I('price',26)}</div><div class="tg">${T('Add Tag',31.8,500,'#565873',129)}</div></div>
${T('Customer Field',43.4,700,'#161827',324,'style="margin:144.500px 0 67.500px"')}
<form-field label="Adres" lw="91" value="Istanbul" vw="123.5"></form-field>
<form-field label="Customer ID" lw="193.6" value="200025896" vw="184.6"></form-field>
<form-field label="Crm ID" lw="105.5" value="000200025896" vw="249.4" focused></form-field>
<form-field label="Müşteri Bilgisi" lw="219.4" value="VIP Müşterisi" vw="204" select></form-field>
</div><div class="sd">${tab('doc',33,32)}${tab('people',36,25,1)}${tab('forum',36,35)}${tab('apps',30,30)}${tab('history',36,32)}</div></div>`); }
});
</script>
</body>
</html>
